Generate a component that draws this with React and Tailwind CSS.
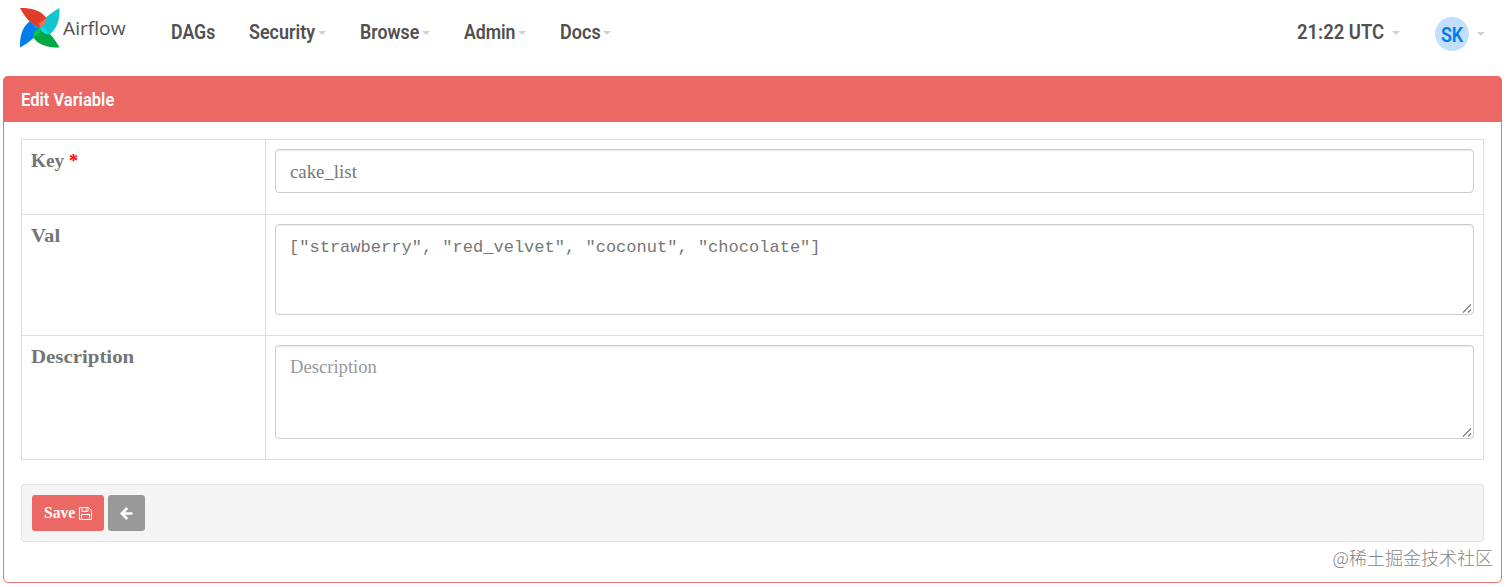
const BLADES = [
  { turn: "rotate(270 20.750 20.750)", base: "#017cee", facet: "#0c9cff" },
  { turn: "rotate(180 20.750 20.750)", base: "#00a845", facet: "#04c74f" },
  { turn: "rotate(90 20.750 20.750)", base: "#11c5d0", facet: "#11dbe6" },
  { turn: "rotate(0 20.750 20.750)", base: "#e03d28", facet: "#f96f55" },
];

function Caret({ className = "" }) {
  return (
    <svg className={className} width="8" height="4" viewBox="0 0 8 4">
      <path d="M0 0h8L4 4z" fill="#d3d0d2" />
    </svg>
  );
}

function Logo() {
  return (
    <svg width="42" height="42" viewBox="0 0 42 42">
      {BLADES.map((b) => (
        <g key={b.turn} transform={b.turn}>
          <path d="M1 1C11 .800 21 2.500 27 10.500C27.500 14 25 18 20.750 20.750C17 19 13 16.500 10.500 14.500C7 11 3.500 5.500 1 1Z" fill={b.base} />
          <path d="M27 10.500C28 14.500 25.500 18.500 20.750 20.750L20.300 16C23 14.500 25.500 13 27 10.500Z" fill={b.facet} />
        </g>
      ))}
    </svg>
  );
}

function Grip() {
  return (
    <svg className="absolute right-0 bottom-0" width="12" height="12" viewBox="0 0 12 12">
      <path d="M2 10.500 10 2.500M7 10.500 10 7.500" stroke="#777" strokeWidth="1.100" fill="none" />
    </svg>
  );
}

function NavItem({ width, children, caret = true }) {
  return (
    <div className={`flex h-7 items-center ${width}`}>
      <span className="h-7 min-w-0 flex-1 whitespace-nowrap">{children}</span>
      {caret && <Caret className="mt-0.5 shrink-0" />}
    </div>
  );
}

function Row({ label, height, children }) {
  return (
    <div className={`flex border-b border-[#dddddd] ${height}`}>
      <div className="w-[244px] shrink-0 border-r border-[#dddddd] pt-[9px] pl-[9px] text-[18px] leading-6 font-bold text-[#757575]">
        {label}
      </div>
      <div className="flex-1 px-[9px] pt-[9px]">{children}</div>
    </div>
  );
}

export default function App() {
  return (
    <div className="flex h-[587px] w-[1512px] flex-col overflow-hidden bg-white font-['Liberation_Serif',serif]">
      <header className="flex h-[76px] shrink-0 items-start font-['Roboto',sans-serif] text-[21px] leading-7 font-semibold text-[#51504f]">
        <div className="flex w-[171px] items-start pt-[7px] pl-[19px]">
          <Logo />
          <span className="mt-[7px] ml-[2px] inline-block origin-left scale-x-[1.01] font-['Open_Sans',sans-serif] text-[19px] leading-7 font-normal">
            Airflow
          </span>
        </div>
        <nav className="flex items-center gap-[34px] pt-[18px]">
          <NavItem width="w-[44px]" caret={false}><span className="inline-block origin-left scale-x-[0.845]">DAGs</span></NavItem>
          <NavItem width="w-[77px]"><span className="inline-block origin-left scale-x-[0.855]">Security</span></NavItem>
          <NavItem width="w-[70px]"><span className="inline-block origin-left scale-x-[0.845]">Browse</span></NavItem>
          <NavItem width="w-[62px]"><span className="inline-block origin-left scale-x-[0.84]">Admin</span></NavItem>
          <NavItem width="w-[51px]"><span className="inline-block origin-left scale-x-[0.86]">Docs</span></NavItem>
        </nav>
        <div className="ml-auto flex items-start pt-[17px] pr-[27px]">
          <div className="pt-px">
            <NavItem width="w-[103px]"><span className="inline-block origin-left scale-x-[0.88]">21:22 UTC</span></NavItem>
          </div>
          <div className="ml-[35px] flex items-center gap-2">
            <span className="flex size-[34px] items-center justify-center rounded-full bg-[#c2dffb] pt-0.5 text-[#017cee]">
              <span className="inline-block scale-x-[0.85]">SK</span>
            </span>
            <Caret />
          </div>
        </div>
      </header>

      <section className="ml-[3px] flex h-[507px] w-[1499px] shrink-0 flex-col rounded-[5px] border border-[#eb7773]">
        <div className="-mx-px -mt-px h-[46px] shrink-0 rounded-t-[5px] bg-[#eb6864] pt-[10px] pl-[18px] font-['Roboto',sans-serif] text-[19px] leading-7 font-semibold text-white">
          <span className="inline-block origin-left scale-x-[0.87] whitespace-nowrap">Edit Variable</span>
        </div>
        <div className="flex flex-col px-[17px] pt-[17px]">
          <div className="border-x border-t border-[#dddddd]">
            <Row height="h-[75px]" label={<><span className="inline-block w-[38px]"><span className="inline-block origin-left scale-x-[1.07]">Key</span></span><span className="text-[#f00]">*</span></>}>
              <div className="h-[44px] rounded-[4px] border border-[#cccccc] pt-[10px] pl-[14px] text-[18px] leading-6 font-normal text-[#777777] shadow-[inset_0_1px_1px_rgba(0,0,0,0.075)]">
                <span className="inline-block origin-left scale-x-[1.045]">cake_list</span>
              </div>
            </Row>
            <Row height="h-[121px]" label={<span className="inline-block origin-left scale-x-[1.15]">Val</span>}>
              <div className="relative h-[91px] rounded-[4px] border border-[#cccccc] pt-[11px] pl-[13px] font-['Liberation_Mono',monospace] text-[17px] leading-6 text-[#777777] shadow-[inset_0_1px_1px_rgba(0,0,0,0.075)]">
                <span className="inline-block origin-left scale-x-[1.002] whitespace-pre">{'["strawberry", "red_velvet", "coconut", "chocolate"]'}</span>
                <Grip />
              </div>
            </Row>
            <Row height="h-[124px]" label={<span className="inline-block origin-left scale-x-[1.16]">Description</span>}>
              <div className="relative h-[94px] rounded-[4px] border border-[#cccccc] pt-[9px] pl-[14px] text-[18px] leading-6 text-[#999999] shadow-[inset_0_1px_1px_rgba(0,0,0,0.075)]">
                <span className="inline-block origin-left scale-x-[1.035]">Description</span>
                <Grip />
              </div>
            </Row>
          </div>
          <div className="mt-[24px] flex h-[58px] gap-1 rounded-[3px] border border-[#e3e3e3] bg-[#f4f4f4] pt-[10px] pl-[10px]">
            <button className="flex h-[36px] w-[72px] items-center rounded-[3px] bg-[#eb6864] pl-3 text-[16px] font-semibold text-white">
              <span className="w-[35px] text-left">
                <span className="inline-block origin-left scale-x-[0.97]">Save</span>
              </span>
              <svg width="13" height="13" viewBox="0 0 13 13" fill="none" stroke="white">
                <path d="M.5.500H9.500L12.500 3.500V12.500H.500ZM3 .500V4.500H9V.500M2.500 12.500V7.500H10.500V12.500" />
                <path d="M7 1.500V3.500" />
              </svg>
            </button>
            <button className="flex h-[36px] w-[37px] items-center justify-center rounded-[3px] bg-[#999999]">
              <svg width="13" height="13" viewBox="0 0 13 13" fill="none" stroke="white" strokeWidth="2.700">
                <path d="M7.200 1 1.900 6.500 7.200 12M2 6.500H12.500" />
              </svg>
            </button>
          </div>
          <div className="mt-px -mr-[9px] self-end font-['Noto_Sans_CJK_SC',sans-serif] text-[18px] leading-7 font-light text-[#858585]">
            @稀土掘金技术社区
          </div>
        </div>
      </section>
    </div>
  );
}
